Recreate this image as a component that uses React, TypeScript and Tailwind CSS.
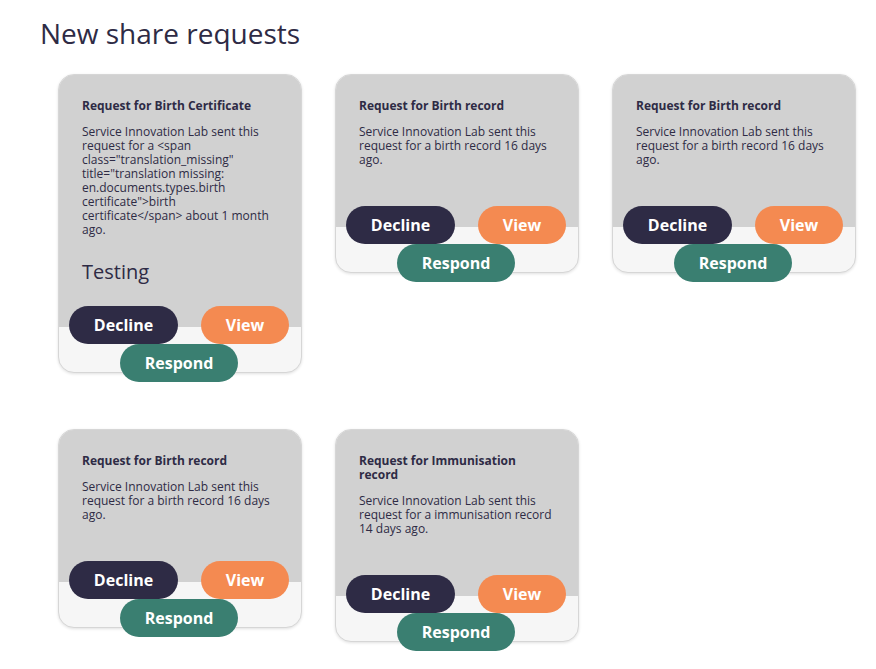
const requests = [
  {
    id: 1,
    title: "Request for Birth Certificate",
    desc: 'Service Innovation Lab sent this request for a <span class="translation_missing" title="translation missing: en.documents.types.birth certificate">birth certificate</span> about 1 month ago.',
    note: "Testing",
  },
  {
    id: 2,
    title: "Request for Birth record",
    desc: "Service Innovation Lab sent this request for a birth record 16 days ago.",
  },
  {
    id: 3,
    title: "Request for Birth record",
    desc: "Service Innovation Lab sent this request for a birth record 16 days ago.",
  },
  {
    id: 4,
    title: "Request for Birth record",
    desc: "Service Innovation Lab sent this request for a birth record 16 days ago.",
  },
  {
    id: 5,
    title: "Request for Immunisation record",
    desc: "Service Innovation Lab sent this request for a immunisation record 14 days ago.",
  },
];

type Req = { id: number; title: string; desc: string; note?: string };

function RequestCard({ title, desc, note }: Req) {
  return (
    <div className="rounded-2xl border border-[#d6d6d6] bg-[#f6f6f6] shadow-[0_1px_3px_rgba(0,0,0,0.12)]">
      {/* Grey body */}
      <div className="rounded-t-[15px] bg-[#d1d1d1] px-[23px] pt-6 pb-[40px]">
        <h2 className="text-[12px] font-bold leading-[14px] text-[#2e2b45]">{title}</h2>
        <p className="mt-3 mb-5 text-[12px] leading-[14px] text-[#2e2b45]">{desc}</p>
        {note && <p className="text-[20px] leading-[30px] text-[#2e2b45]">{note}</p>}
      </div>

      {/* Actions straddle the grey/light edge */}
      <div className="-mt-[21px] -mb-[10px] flex flex-col items-center">
        <div className="flex w-full justify-between pl-[10px] pr-[12px]">
          <button className="h-[38px] w-[109px] rounded-full bg-[#2e2b45] text-[16px] font-bold text-white">
            Decline
          </button>
          <button className="h-[38px] w-[88px] rounded-full bg-[#f48a51] text-[16px] font-bold text-white">
            View
          </button>
        </div>
        <button className="-ml-[2px] h-[38px] w-[118px] rounded-full bg-[#3a7f71] text-[16px] font-bold text-white">
          Respond
        </button>
      </div>
    </div>
  );
}

export default function App() {
  return (
    <div className="min-h-screen bg-white pt-4 font-['Open_Sans',sans-serif]">
      <h1 className="pl-[40px] text-[28px] leading-[34px] text-[#2e2b45]">New share requests</h1>

      <div className="mt-6 ml-[58px] grid w-[798px] grid-cols-[244px_244px_244px] items-start gap-x-[33px] gap-y-[56px]">
        {requests.map((r) => (
          <RequestCard key={r.id} {...r} />
        ))}
      </div>
    </div>
  );
}
